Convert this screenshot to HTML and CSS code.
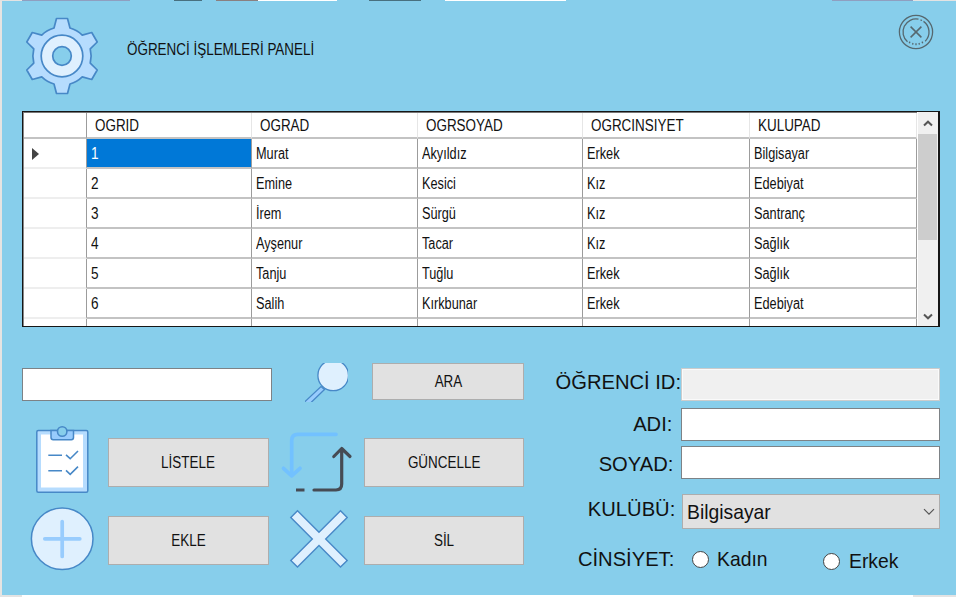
FILE: index.html
```html
<!DOCTYPE html>
<html lang="tr">
<head>
<meta charset="utf-8">
<title>Öğrenci İşlemleri Paneli</title>
<link rel="stylesheet" href="styles.css">
</head>
<body>
<div class="strip-top"></div>
<main class="panel">
  <header class="head">
    <svg class="gear" width="76" height="80" viewBox="-38 -40 76 80" stroke="#4788c7" stroke-width="1.7">
      <path fill="#b6dcfe" stroke-linejoin="round" d="M-8-28L-5.5-37.5H5.5L8-28A29 29 0 0 1 20.25-20.93L29.73-23.51L35.23-13.99L28.25-7.07A29 29 0 0 1 28.25 7.07L35.23 13.99L29.73 23.51L20.25 20.93A29 29 0 0 1 8 28L5.5 37.5H-5.5L-8 28A29 29 0 0 1-20.25 20.93L-29.73 23.51L-35.23 13.99L-28.25 7.07A29 29 0 0 1-28.25-7.07L-35.23-13.99L-29.73-23.51L-20.25-20.93A29 29 0 0 1-8-28Z"/>
      <circle r="20.8" fill="#dff0fe"/>
      <circle r="9.3" fill="#87ceeb"/>
    </svg>
    <h1 class="title"><span class="caps from-left">ÖĞRENCİ İŞLEMLERİ PANELİ</span></h1>
    <svg class="close" width="36" height="36" viewBox="-18 -18 36 36" fill="none" stroke="#56686f" stroke-width="1.3">
      <circle r="16.6"/>
      <path d="M-8.5 9.8A13 13 0 0 1 2.5-12.8M4.5-12.2L6-11.5M7.5-10.6A13 13 0 0 1 9.2 9.2"/>
      <path d="M-6 9.6L-6.8 11.2M-3 11L-3.4 12.6M0 11.3V13.2M3 11L3.4 12.6M6 9.6L6.8 11.2"/>
      <path stroke-width="1.5" d="M-5.4-5.4L5.4 5.4M5.4-5.4L-5.4 5.4"/>
    </svg>
  </header>

  <section class="table">
    <div class="rows">
      <div class="row header"><div class="cell mark"></div><div class="cell"><span class="caps from-left">OGRID</span></div><div class="cell"><span class="caps from-left">OGRAD</span></div><div class="cell"><span class="caps from-left">OGRSOYAD</span></div><div class="cell"><span class="caps from-left">OGRCINSIYET</span></div><div class="cell"><span class="caps from-left">KULUPAD</span></div></div>
      <div class="row"><div class="cell mark"><svg width="7" height="12" viewBox="0 0 7 12"><path d="M0 0L7 6L0 12Z" fill="#444"/></svg></div><div class="cell selected"><span class="txt num">1</span></div><div class="cell"><span class="txt">Murat</span></div><div class="cell"><span class="txt">Akyıldız</span></div><div class="cell"><span class="txt">Erkek</span></div><div class="cell"><span class="txt">Bilgisayar</span></div></div>
      <div class="row"><div class="cell mark"></div><div class="cell"><span class="txt num">2</span></div><div class="cell"><span class="txt">Emine</span></div><div class="cell"><span class="txt">Kesici</span></div><div class="cell"><span class="txt">Kız</span></div><div class="cell"><span class="txt">Edebiyat</span></div></div>
      <div class="row"><div class="cell mark"></div><div class="cell"><span class="txt num">3</span></div><div class="cell"><span class="txt">İrem</span></div><div class="cell"><span class="txt">Sürgü</span></div><div class="cell"><span class="txt">Kız</span></div><div class="cell"><span class="txt">Santranç</span></div></div>
      <div class="row"><div class="cell mark"></div><div class="cell"><span class="txt num">4</span></div><div class="cell"><span class="txt">Ayşenur</span></div><div class="cell"><span class="txt">Tacar</span></div><div class="cell"><span class="txt">Kız</span></div><div class="cell"><span class="txt">Sağlık</span></div></div>
      <div class="row"><div class="cell mark"></div><div class="cell"><span class="txt num">5</span></div><div class="cell"><span class="txt">Tanju</span></div><div class="cell"><span class="txt">Tuğlu</span></div><div class="cell"><span class="txt">Erkek</span></div><div class="cell"><span class="txt">Sağlık</span></div></div>
      <div class="row"><div class="cell mark"></div><div class="cell"><span class="txt num">6</span></div><div class="cell"><span class="txt">Salih</span></div><div class="cell"><span class="txt">Kırkbunar</span></div><div class="cell"><span class="txt">Erkek</span></div><div class="cell"><span class="txt">Edebiyat</span></div></div>
      <div class="row"><div class="cell mark"></div><div class="cell"></div><div class="cell"></div><div class="cell"></div><div class="cell"></div><div class="cell"></div></div>
    </div>
    <div class="scroll">
      <svg width="10" height="7" viewBox="0 0 10 7" fill="none" stroke="#555" stroke-width="2"><path d="M1 5.5L5 1.7L9 5.5"/></svg>
      <div class="thumb"></div>
      <svg class="down" width="10" height="7" viewBox="0 0 10 7" fill="none" stroke="#555" stroke-width="2"><path d="M1 1.5L5 5.3L9 1.5"/></svg>
    </div>
  </section>

  <div class="lower">
    <section class="actions">
      <div class="search">
        <div class="field"></div>
        <svg class="lens" width="43" height="39" viewBox="0 0 43 39" stroke="#4788c7" stroke-width="1.3">
          <path fill="#98ccfd" d="M-1 39.5L16 23.5L19.5 26.5L5.5 40"/>
          <circle cx="28.2" cy="12.4" r="15.3" fill="#dff0fe"/>
        </svg>
        <div class="btn"><span class="caps">ARA</span></div>
      </div>
      <div class="pair first">
        <svg class="icon" width="86" height="68" viewBox="22 425 86 68">
          <rect x="36.8" y="430.5" width="51" height="61.7" rx="1.5" fill="#b6dcfe" stroke="#4788c7" stroke-width="1.5"/>
          <path fill="#fff" d="M41 434.5H83V487.5H41Z"/>
          <path fill="#98ccfd" stroke="#4788c7" stroke-width="1.5" d="M51 430.5H73.5V437.5Q73.5 439.7 71.3 439.7H53.2Q51 439.7 51 437.5Z"/>
          <circle cx="62.2" cy="431.5" r="4.7" fill="#87ceeb" stroke="#4788c7" stroke-width="1.6"/>
          <path fill="none" stroke="#4788c7" stroke-width="1.6" d="M48.3 455.3H62M48.3 470.8H62M66 454.8L70.2 458.7L78 451M66 470.4L70.2 474.3L78 466.6"/>
        </svg>
        <div class="btn"><span class="caps">LİSTELE</span></div>
        <svg class="icon" width="95" height="68" viewBox="269 425 95 68" fill="none" stroke-width="3.7" stroke-linecap="round" stroke-linejoin="round">
          <path stroke="#72c1ff" d="M336 434.3H298Q291.7 434.3 291.7 440.5V475M283.5 468.3L291.7 475.8L300 468.3"/>
          <path stroke="#464b54" stroke-width="3.2" d="M314 490H336Q341.7 490 341.7 484V449M333.8 456.5L341.7 448.5L350 456.5"/>
          <path stroke="#464b54" stroke-linecap="butt" stroke-width="3" d="M296 490H304.5"/>
        </svg>
        <div class="btn"><span class="caps">GÜNCELLE</span></div>
      </div>
      <div class="pair">
        <svg class="icon" width="86" height="68" viewBox="22 505 86 68">
          <circle cx="62.2" cy="538.8" r="30.8" fill="#dff0fe" stroke="#4788c7" stroke-width="1.5"/>
          <path stroke="#98ccfd" stroke-width="3.7" stroke-linecap="round" d="M44.8 538.8H79.8M62.2 521.5V556.5"/>
        </svg>
        <div class="btn"><span class="caps">EKLE</span></div>
        <svg class="icon" width="95" height="68" viewBox="269 505 95 68">
          <path fill="#dff0fe" stroke="#4788c7" stroke-width="1.4" d="M297.5 510.7L319 532.2L340.5 510.7L347.2 517.4L325.7 538.9L347.2 560.4L340.5 567.1L319 545.6L297.5 567.1L290.8 560.4L312.3 538.9L290.8 517.4Z"/>
        </svg>
        <div class="btn"><span class="caps">SİL</span></div>
      </div>
    </section>

    <section class="form">
      <div class="line id"><label>ÖĞRENCİ ID:</label><div class="field off"></div></div>
      <div class="line name"><label>ADI:</label><div class="field"></div></div>
      <div class="line surname"><label>SOYAD:</label><div class="field"></div></div>
      <div class="line club"><label>KULÜBÜ:</label><div class="select"><span>Bilgisayar</span><svg width="12" height="8" viewBox="0 0 12 8" fill="none" stroke="#555" stroke-width="1.2"><path d="M1 1.2L6 6.2L11 1.2"/></svg></div></div>
      <div class="line gender"><label>CİNSİYET:</label><div class="radio"><i></i><span>Kadın</span></div><div class="radio second"><i></i><span>Erkek</span></div></div>
    </section>
  </div>
</main>
<div class="strip-bottom"></div>
</body>
</html>
```

FILE: styles.css
```css
* { box-sizing: border-box; }
body {
  margin: 0;
  width: 956px;
  height: 597px;
  overflow: hidden;
  background: #e6e4e2;
  font-family: "Liberation Sans", Arial, sans-serif;
  color: #111;
}
svg { display: block; flex: none; }

/* slivers of the window behind the panel */
.strip-top {
  height: 1px;
  background: linear-gradient(90deg, #e3e3e3 22px, #8f9fc0 22px 130px, #87ceeb 130px 174px, #48707f 174px 202px, #87ceeb 202px 216px, #8a8080 216px 258px, #fff 258px 337px, #87ceeb 337px 369px, #48707f 369px 421px, #87ceeb 421px 445px, #fff 445px 566px, #87ceeb 566px 832px, #8f9fc0 832px 913px, #e3e3e3 913px);
}
.strip-bottom {
  height: 2px;
  background: linear-gradient(90deg, #e3e3e3 22px, #fff 22px 913px, #e3e3e3 913px);
}
.panel {
  height: 594px;
  margin-left: 2px;
  padding: 0 16px 0 20px;
  background: #87ceeb;
}

.caps, .txt { display: inline-block; font-size: 16px; line-height: 18px; white-space: nowrap; }
.caps { transform: scaleX(.84); }
.txt { transform: scaleX(.795); transform-origin: left; }
.from-left { transform-origin: left; }
.num { transform: scaleX(.85); }

.head { display: flex; height: 110px; }
.gear { margin: 15px 0 0 2px; }
.title { flex: 1; margin: 40px 0 0 27px; font-weight: normal; font-size: 16px; line-height: 18px; }
.close { margin: 13px 6px 0 0; }

.table {
  display: flex;
  height: 216px;
  border: 1px solid #161616;
  border-right-width: 2px;
  background: #fff;
  overflow: hidden;
}
.rows { width: 894px; border-top: 1px solid #777; border-left: 1px solid #888; overflow: hidden; }
.row { display: grid; grid-template-columns: 63px 165px 166px 165px 167px 167px; height: 30px; }
.cell {
  display: flex;
  align-items: center;
  padding-left: 4px;
  padding-top: 1px;
  border-right: 1px solid #9c9c9c;
  border-bottom: 2px solid #c3c3c3;
}
.cell.mark { padding-left: 8px; border-bottom-color: #eee; }
.row.header { height: 26px; }
.header .cell { padding-left: 8px; border-right-color: #e6e6e6; }
.header .cell.mark { border-right-color: #9c9c9c; border-bottom-color: #c3c3c3; }
.cell.selected { background: #0078d7; color: #fff; }
.scroll { flex: 1; background: #f0f0f0; margin-left: 1px; }
.scroll > svg { margin: 8px 0 0 5px; }
.thumb { height: 106px; margin: 7px 1px 0 0; background: #cdcdcd; }
.scroll > .down { margin-top: 73px; }

.lower { display: flex; }
.actions { width: 502px; }
.search { display: flex; height: 75px; padding-top: 36px; }
.field { width: 250px; height: 33px; background: #fff; border: 1px solid #7d8286; }
.search .field { margin-top: 5px; height: 33px; }
.lens { margin: 0 0 0 33px; }
.btn {
  display: flex;
  align-items: center;
  justify-content: center;
  width: 161px;
  height: 49px;
  padding-top: 1px;
  background: #e1e1e1;
  border: 1px solid #adadad;
}
.search .btn { width: 152px; height: 37px; margin: 0 0 0 24px; }
.pair { display: flex; height: 68px; align-items: flex-start; }
.pair.first { margin-top: 23px; height: 80px; }
.pair .btn { margin-top: 13px; }
.pair:last-child .btn { margin-top: 11px; }

.form { width: 416px; padding-top: 41px; font-size: 21px; line-height: 24px; }
.line { display: flex; }
.line label { width: 157px; flex: none; display: flex; justify-content: flex-end; white-space: nowrap; transform: scaleX(.96); transform-origin: right; }
.line .field { width: 259px; }
.field.off { background: #f0f0f0; border: 1px solid #ccc; box-shadow: inset 0 0 0 1px #fafafa; }
.id label { padding-top: 2px; }
.name { margin-top: 7px; }
.name label { padding: 4px 9px 0 0; }
.surname { margin-top: 5px; }
.surname label { padding: 6px 8px 0 0; }
.club { margin-top: 15px; }
.club label { padding: 3px 6px 0 0; }
.select {
  display: flex;
  align-items: center;
  justify-content: space-between;
  width: 258px;
  height: 35px;
  margin-left: 1px;
  padding: 0 4px;
  background: #e1e1e1;
  border: 1px solid #adadad;
}
.select span { display: inline-block; transform: scaleX(.92); transform-origin: left; }
.gender { margin-top: 18px; }
.gender label { padding-right: 7px; }
.radio { display: flex; align-items: center; height: 24px; margin-left: 11px; width: 131px; white-space: nowrap; }
.radio i { flex: none; width: 17px; height: 17px; margin-right: 8px; border: 1px solid #444; border-radius: 50%; background: #fff; }
.radio span { display: inline-block; transform: scaleX(.92); transform-origin: left; }
.radio.second { margin: 2px 0 0 0; width: 90px; }
.radio.second i { margin-right: 9px; }
```
